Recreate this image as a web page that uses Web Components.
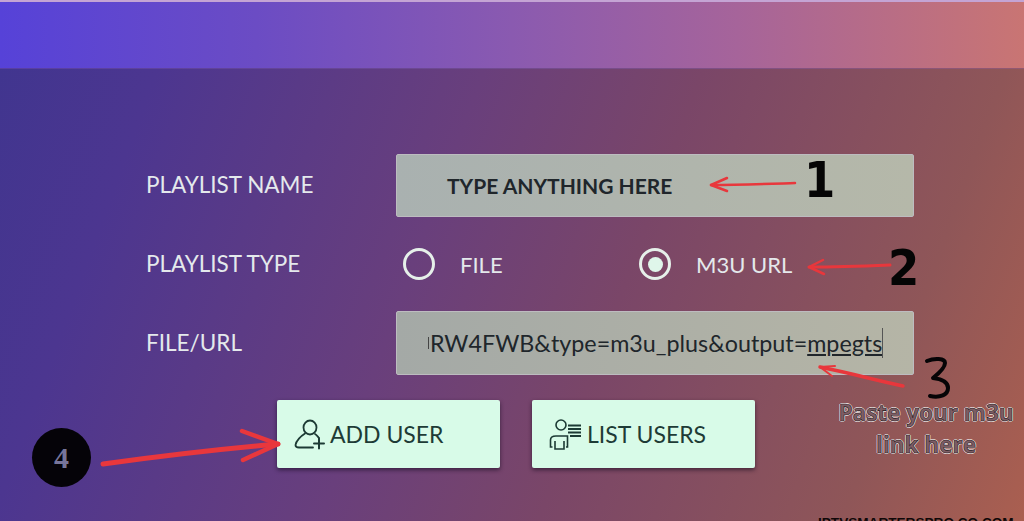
<!DOCTYPE html>
<html>
<head>
<meta charset="utf-8">
<style>
    html, body { margin: 0; height: 100%; overflow: hidden; }
    body { font-family: "Lato", "Noto Sans", sans-serif; }
</style>
</head>
<body>
<playlist-screen>
    <form-row label="PLAYLIST NAME">
        <text-field strong>TYPE ANYTHING HERE</text-field>
    </form-row>
    <form-row label="PLAYLIST TYPE" slim>
        <radio-option>FILE</radio-option>
        <radio-option checked>M3U URL</radio-option>
    </form-row>
    <form-row label="FILE/URL">
        <text-field url>RW4FWB&amp;type=m3u_plus&amp;output=<u>mpegts</u></text-field>
    </form-row>
    <div slot="actions">
        <action-button icon="add">ADD USER</action-button>
        <action-button icon="list">LIST USERS</action-button>
    </div>
</playlist-screen>

<script>
class PlaylistScreen extends HTMLElement {
    constructor() {
        super();
        this.shadowDOM = this.attachShadow({ mode: "open" });
    }

    connectedCallback() {
        this.shadowDOM.innerHTML = `
        <style>
            :host {
                display: block;
                position: relative;
                width: 1024px;
                height: 521px;
                overflow: hidden;
                background: linear-gradient(110deg, #3f358f 0%, #4c3690 15%, #693f7c 42%, #7a4668 60%, #8f5658 85%, #aa5f50 100%);
            }
            .top-bar {
                box-sizing: border-box;
                height: 69px;
                border-top: 2px solid #c4a4d4;
                border-bottom: 1px solid rgba(90, 60, 110, .5);
                background: linear-gradient(90deg, #5642d8 0%, #6b4cc4 25%, #8a5ab0 50%, #a6649a 72%, #c97573 100%);
            }
            .form {
                display: flex;
                flex-direction: column;
                padding: 85px 110px 0 146px;
            }
            .actions {
                margin: 25px 0 0 131px;
            }
            .actions ::slotted(div) {
                display: flex;
                gap: 32px;
            }
            .num {
                position: absolute;
                font-family: "DejaVu Sans Condensed", "DejaVu Sans", sans-serif;
                font-weight: 700;
                color: #050505;
                line-height: 1;
            }
            .paste {
                position: absolute;
                left: 826px;
                top: 397px;
                width: 200px;
                text-align: center;
                font: 700 22.5px/32px "Open Sans", sans-serif;
                color: #7d5d64;
                -webkit-text-stroke: 0.6px #1c1216;
                text-shadow: 1px 0 0 #f0e6e6, -1px 0 0 #f0e6e6, 0 1px 0 #f0e6e6, 0 -1px 0 #f0e6e6;
            }
            .four {
                position: absolute;
                left: 32px;
                top: 428px;
                width: 59px;
                height: 59px;
                border-radius: 50%;
                background: #050308;
                color: #77759a;
                display: flex;
                align-items: center;
                justify-content: center;
                font: 700 30px "Liberation Serif", serif;
            }
            .watermark {
                position: absolute;
                left: 818px;
                top: 514px;
                font: 700 13.6px/18px "Liberation Sans", sans-serif;
                color: #100808;
                white-space: nowrap;
            }
            svg.marks {
                position: absolute;
                left: 0;
                top: 0;
                pointer-events: none;
            }
        </style>
        <div class="top-bar"></div>
        <div class="form">
            <slot></slot>
            <div class="actions"><slot name="actions"></slot></div>
        </div>
        <svg class="marks" width="1024" height="521" fill="none" stroke="#e8373c" stroke-linecap="round" stroke-linejoin="round">
            <path d="M711 185 C740 185 765 184 795 183" stroke-width="2.5"/>
            <path d="M727 178 L711 185 L727 191" stroke-width="2.5"/>
            <path d="M809 267 C840 267 865 266 890 265" stroke-width="3"/>
            <path d="M823 260 L809 267 L824 274" stroke-width="2.5"/>
            <path d="M820 367 C850 373 875 380 903 386" stroke-width="3.5"/>
            <path d="M835 366 L820 367 L832 376" stroke-width="2"/>
            <path d="M103 464 C160 456 220 449 278 444" stroke-width="5"/>
            <path d="M242 431 L278 444 L243 460" stroke-width="4.5"/>
        </svg>
        <span class="num" style="left:804px;top:155px;font-size:50px">1</span>
        <span class="num" style="left:888px;top:243px;font-size:50px">2</span>
        <svg class="marks" width="1024" height="521" fill="none" stroke="#060406" stroke-width="4" stroke-linecap="round" stroke-linejoin="round">
            <path d="M927 361 C934 358 945 358 945 363 C945 368 938 374 933 378 C941 379 948 382 948 388 C948 395 940 398 930 396"/>
        </svg>
        <div class="paste">Paste your m3u<br>link here</div>
        <div class="four">4</div>
        <div class="watermark">IPTVSMARTERSPRO.CO.COM</div>
    `;
    }
}

class FormRow extends HTMLElement {
    constructor() {
        super();
        this.shadowDOM = this.attachShadow({ mode: "open" });
    }

    connectedCallback() {
        this.shadowDOM.innerHTML = `
        <style>
            :host {
                display: grid;
                grid-template-columns: 250px 518px;
                align-items: center;
                color: #e4e9ec;
                font-size: 22.5px;
            }
            :host([slim]) { height: 94px; }
            .label { margin-top: -2px; }
            .controls { display: flex; }
        </style>
        <div class="label">${this.getAttribute("label")}</div>
        <div class="controls"><slot></slot></div>
    `;
    }
}

class TextField extends HTMLElement {
    constructor() {
        super();
        this.shadowDOM = this.attachShadow({ mode: "open" });
    }

    connectedCallback() {
        this.shadowDOM.innerHTML = `
        <style>
            :host {
                display: flex;
                align-items: center;
                box-sizing: border-box;
                width: 518px;
                height: 63px;
                padding-left: 50px;
                border: 1px solid #bdbcc0;
                border-radius: 2px;
                background: linear-gradient(90deg, #a9b1b0, #b5b8a9);
                color: #20262b;
                font-size: 21px;
                white-space: nowrap;
            }
            :host([strong]) { font-weight: 700; }
            :host([url]) {
                height: 64px;
                padding-left: 33px;
                font-size: 23.3px;
                background: linear-gradient(90deg, #a4a9a6, #b5b5a6);
            }
            :host([url]) .caret {
                width: 1px;
                height: 30px;
                background: #555;
            }
            /* sliver of the character scrolled out of the field */
            :host([url]) .cut {
                width: 1px;
                height: 12px;
                margin: 0 1px 0 -2px;
                background: #444;
            }
        </style>
        <span class="cut"></span><slot></slot><span class="caret"></span>
    `;
    }
}

class RadioOption extends HTMLElement {
    constructor() {
        super();
        this.shadowDOM = this.attachShadow({ mode: "open" });
    }

    connectedCallback() {
        this.shadowDOM.innerHTML = `
        <style>
            :host {
                display: flex;
                align-items: center;
                gap: 25px;
                width: 236px;
                padding-left: 7px;
                font-size: 22px;
                color: #e4e9ec;
                box-sizing: border-box;
            }
            .ring {
                box-sizing: border-box;
                width: 32px;
                height: 32px;
                border: 3.5px solid #e6f0ea;
                border-radius: 50%;
                display: flex;
                align-items: center;
                justify-content: center;
            }
            .dot { width: 15px; height: 15px; border-radius: 50%; background: #dff6ea; display: none; }
            :host([checked]) .dot { display: block; }
        </style>
        <span class="ring"><span class="dot"></span></span>
        <slot></slot>
    `;
    }
}

class ActionButton extends HTMLElement {
    constructor() {
        super();
        this.shadowDOM = this.attachShadow({ mode: "open" });
    }

    connectedCallback() {
        const add = `<svg width="32" height="32" viewBox="0 0 32 32" fill="none" stroke="#1c3a34" stroke-width="1.8" stroke-linecap="round">
            <ellipse cx="17" cy="9.5" rx="6.5" ry="7"/>
            <path d="M12 15.5 C8 18 3 23 2.5 27 C2.5 29 4 29.5 6 29.5 H20"/>
            <path d="M22 16 C24 17 25 19 26 20"/>
            <path d="M21 25.5 H31 M26 20.5 V30.5" stroke-width="2"/>
        </svg>`;
        const list = `<svg width="34" height="34" viewBox="0 0 34 34" fill="none" stroke="#1c3a34" stroke-width="1.6">
            <circle cx="13" cy="8" r="5"/>
            <path d="M4.5 30 H2.5 V23 C2.5 20 5 19 8 19 H19.5 V30 H18"/>
            <path d="M7 24 V32 H16 V24"/>
            <path d="M20 8.5 H33 M20 12 H33 M20 15.5 H33 M22 19 H33" stroke-width="2.2"/>
        </svg>`;
        this.shadowDOM.innerHTML = `
        <style>
            :host {
                display: flex;
                align-items: center;
                gap: 5px;
                box-sizing: border-box;
                width: 223px;
                height: 68px;
                padding-left: 16px;
                border-radius: 2px;
                background: #d8fbe8;
                color: #1e3b36;
                font-size: 23px;
                box-shadow: 0 2px 4px rgba(20, 10, 30, .6);
            }
        </style>
        ${this.getAttribute("icon") === "add" ? add : list}
        <slot></slot>
    `;
    }
}

customElements.define("playlist-screen", PlaylistScreen);
customElements.define("form-row", FormRow);
customElements.define("text-field", TextField);
customElements.define("radio-option", RadioOption);
customElements.define("action-button", ActionButton);
</script>
</body>
</html>
